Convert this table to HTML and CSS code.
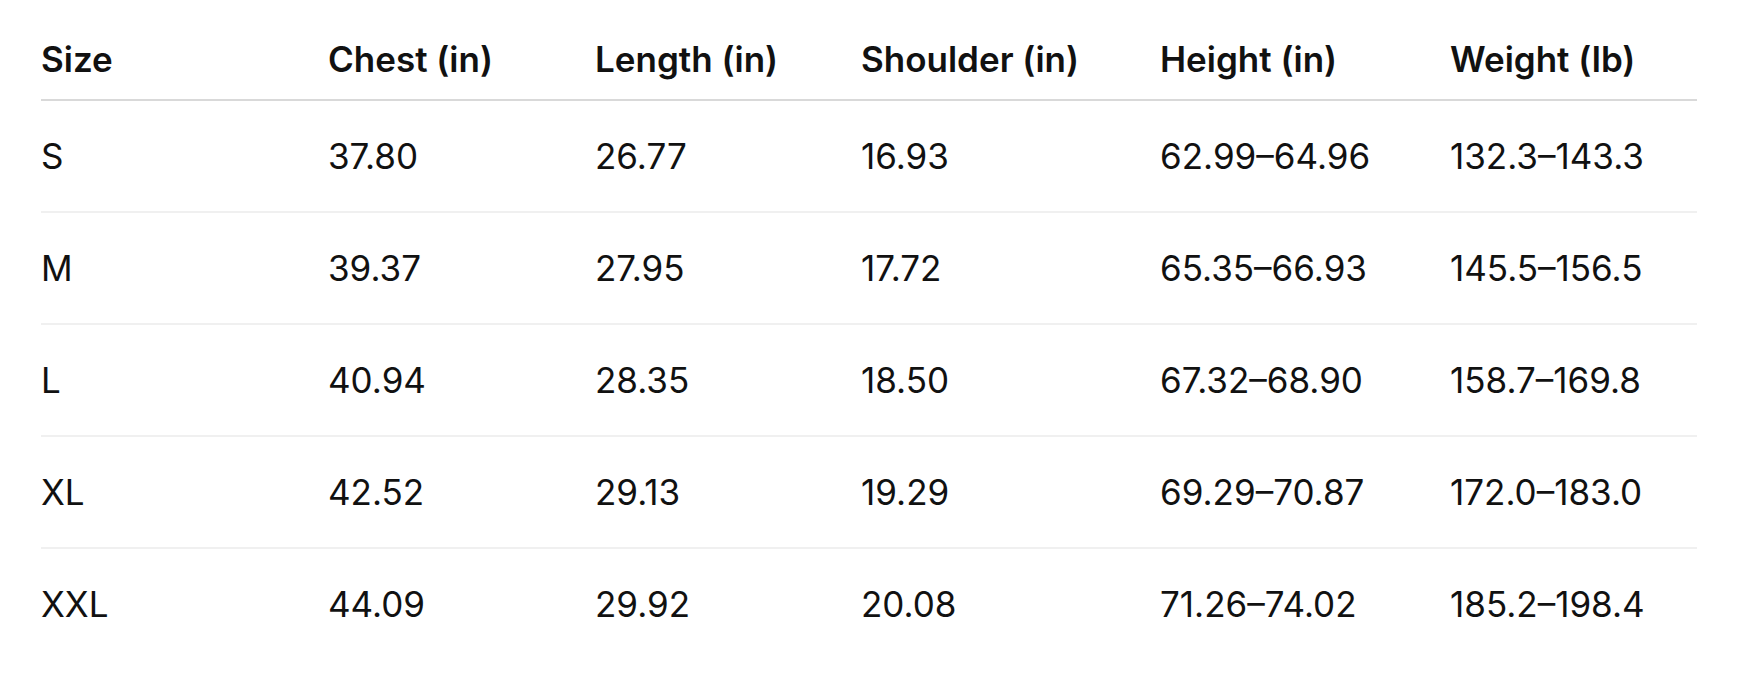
FILE: index.html
```html
<!DOCTYPE html>
<html lang="en">
<head>
<meta charset="utf-8">
<title>Size chart</title>
<link rel="stylesheet" href="styles.css">
</head>
<body>
<div class="wrap">
  <table class="chart">
    <colgroup>
      <col class="c1"><col class="c2"><col class="c3"><col class="c4"><col class="c5"><col class="c6">
    </colgroup>
    <thead>
      <tr><th>Size</th><th>Chest (in)</th><th>Length (in)</th><th>Shoulder (in)</th><th>Height (in)</th><th>Weight (lb)</th></tr>
    </thead>
    <tbody>
      <tr><td>S</td><td>37.80</td><td>26.77</td><td>16.93</td><td>62.99–64.96</td><td>132.3–143.3</td></tr>
      <tr><td>M</td><td>39.37</td><td>27.95</td><td>17.72</td><td>65.35–66.93</td><td>145.5–156.5</td></tr>
      <tr><td>L</td><td>40.94</td><td>28.35</td><td>18.50</td><td>67.32–68.90</td><td>158.7–169.8</td></tr>
      <tr><td>XL</td><td>42.52</td><td>29.13</td><td>19.29</td><td>69.29–70.87</td><td>172.0–183.0</td></tr>
      <tr><td>XXL</td><td>44.09</td><td>29.92</td><td>20.08</td><td>71.26–74.02</td><td>185.2–198.4</td></tr>
    </tbody>
  </table>
</div>
</body>
</html>
```
FILE: styles.css
```css
html, body {
  margin: 0;
  padding: 0;
  background: #ffffff;
}

body {
  font-family: Inter, "Noto Sans", "Liberation Sans", sans-serif;
  color: #111111;
}

.wrap {
  padding: 19px 44px 0 41px;
}

.chart {
  width: 1656px;
  border-collapse: collapse;
  table-layout: fixed;
}

.c1 { width: 287px; }
.c2 { width: 267px; }
.c3 { width: 266px; }
.c4 { width: 299px; }
.c5 { width: 290px; }
.c6 { width: auto; }

.chart th,
.chart td {
  text-align: left;
  padding: 0;
  white-space: nowrap;
  vertical-align: middle;
}

.chart th {
  height: 80px;
  font-size: 35px;
  font-weight: 600;
  border-bottom: 2px solid #d9d9d9;
}

.chart td {
  height: 110px;
  font-size: 35px;
  font-weight: 400;
  border-bottom: 2px solid #f0f0f0;
}

.chart tbody tr:last-child td {
  border-bottom: none;
}
```
